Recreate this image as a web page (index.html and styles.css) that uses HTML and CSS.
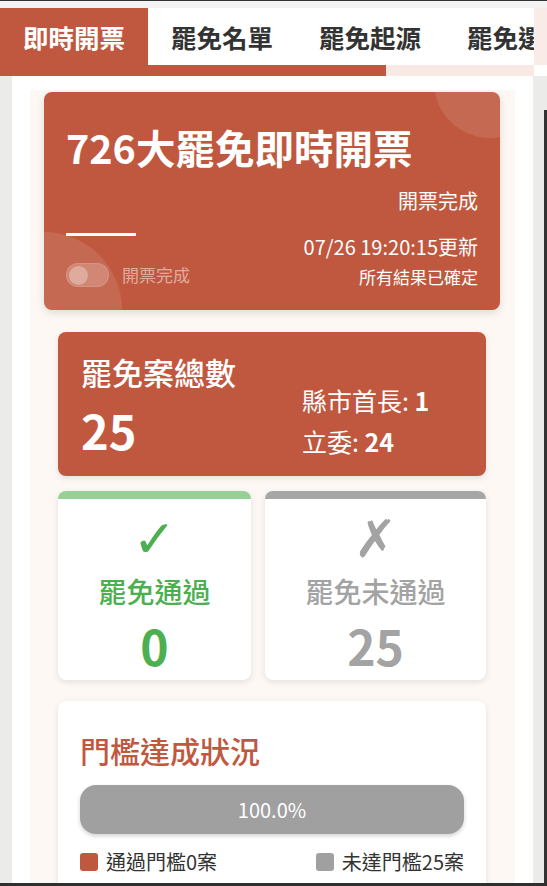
FILE: index.html
```html
<!DOCTYPE html>
<html lang="zh-Hant">
<head>
  <meta charset="UTF-8" />
  <meta name="viewport" content="width=device-width, initial-scale=1.0"/>
  <title>726大罷免即時開票</title>
  <link rel="stylesheet" href="styles.css">
</head>
<body>
  <div class="top-gap"></div>

  <div class="tabbar">
    <nav class="tabs">
      <a class="tab active">即時開票</a>
      <a class="tab">罷免名單</a>
      <a class="tab">罷免起源</a>
      <a class="tab">罷免選區</a>
    </nav>
    <div class="tabbar-edge"></div>
  </div>
  <div class="scroll-row">
    <div class="scroll-track"><div class="scroll-fill" style="width: 386px;"></div></div>
  </div>

  <div class="viewport">
    <div class="page">
      <div class="content">

        <section class="hero">
          <span class="bubble bubble-top"></span>
          <span class="bubble bubble-bottom"></span>
          <h1>726大罷免即時開票</h1>
          <p class="hero-status">開票完成</p>
          <div class="hero-row">
            <div class="hero-left">
              <div class="hero-line"></div>
              <div class="toggle-row">
                <span class="toggle"><span class="knob"></span></span>
                <span class="toggle-label">開票完成</span>
              </div>
            </div>
            <div class="hero-right">
              <p class="updated">07/26 19:20:15更新</p>
              <p class="confirmed">所有結果已確定</p>
            </div>
          </div>
        </section>

        <div class="stats">
          <section class="total-card">
            <div class="total-left">
              <h2>罷免案總數</h2>
              <div class="total-num">25</div>
            </div>
            <div class="total-right">
              <p>縣市首長: <b>1</b></p>
              <p>立委: <b>24</b></p>
            </div>
          </section>

          <div class="result-row">
            <section class="result-card passed">
              <div class="result-icon">✓</div>
              <div class="result-label">罷免通過</div>
              <div class="result-num">0</div>
            </section>
            <section class="result-card failed">
              <div class="result-icon">✗</div>
              <div class="result-label">罷免未通過</div>
              <div class="result-num">25</div>
            </section>
          </div>

          <section class="threshold-card">
            <h2>門檻達成狀況</h2>
            <div class="bar">100.0%</div>
            <div class="legend">
              <span><i class="dot red"></i>通過門檻0案</span>
              <span><i class="dot gray"></i>未達門檻25案</span>
            </div>
          </section>
        </div>

      </div>
    </div>
    <div class="rail"></div>
  </div>
  <div class="bottom-edge"></div>
</body>
</html>
```

FILE: styles.css
```css
body {
  margin: 0;
  background: #ebebe9;
  border-top: 1px solid #333;
  font-family: "Noto Sans CJK TC", "Noto Sans", sans-serif;
  color: #333;
  height: 885px;
  overflow: hidden;
}
p, h1, h2 {
  margin: 0;
}

.top-gap {
  height: 7px;
  background: #f3f3f3;
}

.tabbar {
  display: flex;
  height: 57px;
}
.tabs {
  width: 534px;
  flex: none;
  display: flex;
  overflow: hidden;
  background: white;
}
.tab {
  flex: none;
  display: flex;
  align-items: center;
  padding: 0 23px;
  font-size: 25.5px;
  font-weight: 700;
  color: #333;
  white-space: nowrap;
}
.tab.active {
  background: #c0583f;
  color: white;
}
.tabbar-edge {
  flex: 1;
  background: #f8ebe8;
}

.scroll-row {
  display: flex;
  height: 11px;
  background: white;
}
.scroll-track {
  width: 534px;
  background: #f9e9e5;
}
.scroll-fill {
  height: 100%;
  background: #c0583f;
}

.viewport {
  height: 807px;
  overflow: hidden;
  display: flex;
}
.page {
  flex: none;
  margin-left: 12px;
  width: 521px;
  background: white;
  padding: 14px 18px 0;
  box-sizing: border-box;
}
.rail {
  flex: 1;
  background:
    linear-gradient(#ebebe9, #ebebe9) left top / calc(100% - 3px) 100% no-repeat,
    linear-gradient(#ebebe9 34px, #333 34px);
}
.content {
  background: #fdf8f4;
  padding: 2px 15px 40px 14px;
  min-height: 100%;
}

/* hero */
.hero {
  position: relative;
  overflow: hidden;
  background: #c0583f;
  color: white;
  border-radius: 8px;
  padding: 30px 22px 21px;
  box-shadow: 0 3px 8px rgba(0,0,0,0.12);
}
.bubble {
  position: absolute;
  border-radius: 50%;
  background: rgba(255,255,255,0.1);
}
.bubble-top {
  width: 112px; height: 112px;
  top: -66px; right: -46px;
}
.bubble-bottom {
  width: 156px; height: 156px;
  bottom: -78px; left: -78px;
}
.hero h1 {
  position: relative;
  font-size: 39.5px;
  line-height: 50px;
  font-weight: 700;
}
.hero-status {
  margin-top: 15px;
  text-align: right;
  font-size: 20px;
  line-height: 28px;
}
.hero-row {
  position: relative;
  margin-top: 18px;
  display: flex;
  justify-content: space-between;
  align-items: flex-end;
}
.hero-line {
  width: 70px;
  height: 3px;
  background: white;
  margin-bottom: 27px;
}
.toggle-row {
  display: flex;
  align-items: center;
  margin-bottom: 2px;
}
.toggle {
  width: 43px;
  height: 24px;
  border-radius: 12px;
  box-sizing: border-box;
  padding: 2px;
  background: rgba(255,255,255,0.2);
  border: 1px solid rgba(255,255,255,0.12);
}
.knob {
  display: block;
  width: 19px;
  height: 19px;
  border-radius: 50%;
  background: rgba(255,255,255,0.3);
}
.toggle-label {
  margin-left: 13px;
  font-size: 17px;
  line-height: 24px;
  color: rgba(255,255,255,0.5);
}
.hero-right {
  text-align: right;
}
.updated {
  font-size: 20px;
  line-height: 28px;
}
.confirmed {
  margin-top: 4px;
  font-size: 17px;
  line-height: 24px;
}

/* stats */
.stats {
  padding: 22px 14px 0;
}
.total-card {
  display: grid;
  grid-template-columns: 1fr 161px;
  align-items: end;
  background: #c0583f;
  color: white;
  border-radius: 8px;
  padding: 20px 23px 18px;
  box-shadow: 0 2px 6px rgba(0,0,0,0.1);
}
.total-card h2 {
  font-size: 31px;
  line-height: 40px;
  font-weight: 500;
}
.total-num {
  margin-top: 10px;
  font-size: 47px;
  line-height: 56px;
  font-weight: 700;
}
.total-right {
  margin-bottom: -4px;
}
.total-right p {
  font-size: 25px;
  line-height: 41px;
}

.result-row {
  display: flex;
  gap: 14px;
  margin-top: 15px;
}
.result-card {
  flex: 1 1 auto;
  background: white;
  border-radius: 8px;
  border-top: 8px solid #96d096;
  padding: 16px 10px 7px;
  text-align: center;
  box-shadow: 0 2px 6px rgba(0,0,0,0.1);
}
.result-card.failed {
  border-top-color: #a6a6a6;
}
.result-icon {
  font-family: "DejaVu Sans", sans-serif;
  font-size: 52px;
  line-height: 48px;
}
.result-label {
  margin-top: 10px;
  font-size: 28px;
  line-height: 36px;
  font-weight: 500;
}
.result-num {
  margin-top: 8px;
  font-size: 48px;
  line-height: 56px;
  font-weight: 700;
}
.passed { color: #4caf50; }
.failed { color: #a3a3a3; }

.threshold-card {
  margin-top: 21px;
  background: white;
  border-radius: 8px;
  padding: 29px 22px 20px;
  box-shadow: 0 2px 6px rgba(0,0,0,0.1);
}
.threshold-card h2 {
  font-size: 30px;
  line-height: 40px;
  font-weight: 500;
  color: #c0583f;
}
.bar {
  margin-top: 15px;
  height: 49px;
  border-radius: 16px;
  background: #a0a0a0;
  color: white;
  font-size: 20px;
  display: flex;
  align-items: center;
  justify-content: center;
  box-shadow: 0 2px 4px rgba(0,0,0,0.18);
}
.legend {
  margin-top: 14px;
  display: flex;
  justify-content: space-between;
  font-size: 20px;
  line-height: 28px;
}
.legend span {
  display: flex;
  align-items: center;
}
.dot {
  width: 18px;
  height: 18px;
  border-radius: 3px;
  margin-right: 8px;
}
.dot.red { background: #c0583f; }
.dot.gray { background: #a0a0a0; }

.bottom-edge {
  height: 3px;
  background: #2f2f2f;
}
```
